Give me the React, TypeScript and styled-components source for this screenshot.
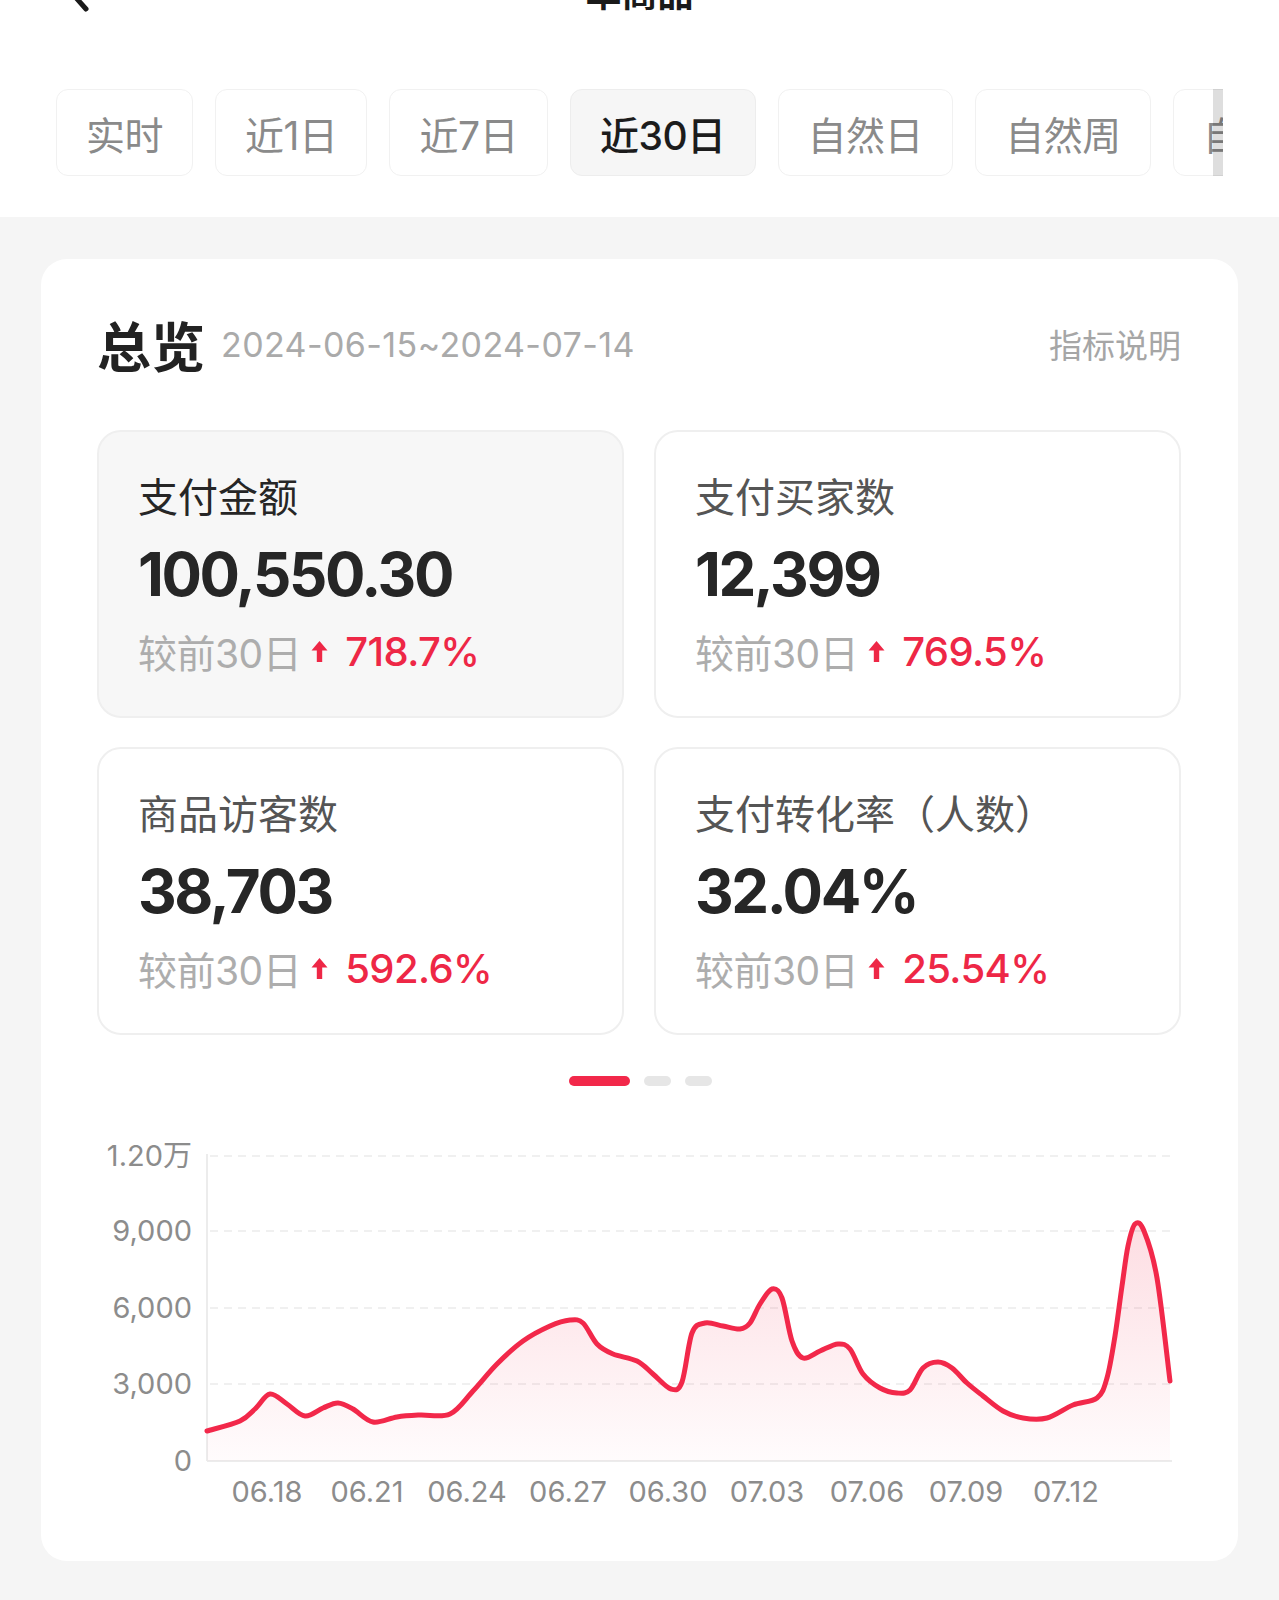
import styled, { createGlobalStyle } from 'styled-components';

const GlobalStyle = createGlobalStyle`
  html, body {
    margin: 0;
    padding: 0;
    background: #f5f5f5;
  }
  body {
    font-family: Inter, 'Noto Sans CJK SC', sans-serif;
    overflow-x: hidden;
  }
`;

const Page = styled.div`
  width: 1279px;
  min-height: 1600px;
  background: #f5f5f5;
  overflow: hidden;
`;

const TopSection = styled.div`
  background: #ffffff;
  padding-bottom: 41px;
`;

const NavBar = styled.div`
  position: relative;
  height: 44px;
  margin-top: -31px;
  display: flex;
  align-items: center;
  justify-content: center;
`;

const BackButton = styled.div`
  position: absolute;
  left: 62px;
  top: 0;
  width: 30px;
  height: 44px;
`;

const NavTitle = styled.div`
  font-family: 'Noto Sans CJK SC', sans-serif;
  font-size: 36px;
  font-weight: 700;
  line-height: 44px;
  color: #1a1a1a;
`;

const TabViewport = styled.div`
  position: relative;
  margin: 76px 0 0 56px;
  width: 1167px;
  overflow: hidden;

  &::after {
    content: '';
    position: absolute;
    right: 0;
    top: 0;
    bottom: 0;
    width: 10px;
    background: rgba(0, 0, 0, 0.13);
  }
`;

const TabRow = styled.div`
  display: flex;
  gap: 22px;
`;

const Tab = styled.div<{ active?: boolean }>`
  flex-shrink: 0;
  height: 87px;
  padding: 0 29px;
  box-sizing: border-box;
  display: flex;
  align-items: center;
  border: 1.5px solid ${(p) => (p.active ? '#ededed' : '#f1f1f1')};
  border-radius: 12px;
  background: ${(p) => (p.active ? '#f6f6f6' : '#ffffff')};
  color: ${(p) => (p.active ? '#1c1c1c' : '#8a8a8a')};
  font-size: 39px;
  font-weight: ${(p) => (p.active ? 500 : 400)};
  letter-spacing: -0.5px;
`;

const Card = styled.div`
  margin: 42px 41px 40px 41px;
  background: #ffffff;
  border-radius: 26px;
  padding: 55px 57px 50px 56px;
`;

const CardHeader = styled.div`
  display: flex;
  align-items: center;
  height: 60px;
`;

const CardTitle = styled.div`
  font-family: 'Noto Sans CJK SC', sans-serif;
  font-size: 54px;
  font-weight: 700;
  color: #222;
  margin-right: 16px;
`;

const DateRange = styled.div`
  font-size: 34px;
  color: #aaaaaa;
  letter-spacing: 0.4px;
  flex: 1;
`;

const HeaderLink = styled.div`
  font-family: 'Noto Sans CJK SC', sans-serif;
  font-size: 33px;
  color: #a6a6a6;
`;

const MetricGrid = styled.div`
  margin-top: 56px;
  display: grid;
  grid-template-columns: 1fr 1fr;
  gap: 29px 30px;
`;

const MetricCard = styled.div<{ active?: boolean }>`
  height: 288px;
  box-sizing: border-box;
  padding: 37px 30px 0 39px;
  border: 2px solid #efefef;
  border-radius: 24px;
  background: ${(p) => (p.active ? '#f7f7f7' : '#ffffff')};
`;

const MetricLabel = styled.div<{ active?: boolean }>`
  font-family: 'Noto Sans CJK SC', sans-serif;
  font-size: 40px;
  line-height: 52px;
  color: ${(p) => (p.active ? '#262626' : '#555555')};
`;

const MetricValue = styled.div`
  margin-top: 13px;
  font-size: 60px;
  line-height: 80px;
  font-weight: 700;
  color: #262626;
  letter-spacing: -2.4px;
`;

const CompareRow = styled.div`
  margin-top: 11px;
  display: flex;
  align-items: center;
  height: 52px;
`;

const CompareLabel = styled.span`
  font-size: 39px;
  color: #adadad;
  letter-spacing: -0.5px;
`;

const CompareValue = styled.span`
  margin-left: 17px;
  font-size: 40px;
  font-weight: 500;
  color: #ee2746;
  letter-spacing: -0.6px;
`;

const ArrowWrap = styled.span`
  display: inline-flex;
  margin-left: 10px;
`;

const Dots = styled.div`
  margin-top: 41px;
  display: flex;
  justify-content: center;
  gap: 14px;
  padding-left: 2px;
`;

const Dot = styled.div<{ active?: boolean }>`
  width: ${(p) => (p.active ? 61 : 27)}px;
  height: 10px;
  border-radius: 5px;
  background: ${(p) => (p.active ? '#f2284a' : '#e6e6e6')};
`;

const ChartBox = styled.div`
  margin-top: 35px;
  height: 390px;
`;

const tabs = ['实时', '近1日', '近7日', '近30日', '自然日', '自然周', '自然月'];

const metrics = [
  { label: '支付金额', value: '100,550.30', change: '718.7%', active: true },
  { label: '支付买家数', value: '12,399', change: '769.5%' },
  { label: '商品访客数', value: '38,703', change: '592.6%' },
  { label: '支付转化率（人数）', value: '32.04%', change: '25.54%' },
];

// page coordinates of the curve, shifted into the chart box below
const OX = 97;
const OY = 1120;
const rawPoints: [number, number][] = [
  [207, 1430], [240, 1420], [255, 1408], [270, 1393], [287, 1403], [305, 1415],
  [323, 1407], [338, 1402], [353, 1408], [373, 1421], [397, 1416], [420, 1414],
  [450, 1413], [473, 1390], [497, 1363], [523, 1340], [550, 1325], [570, 1319],
  [583, 1322], [597, 1343], [613, 1353], [637, 1360], [653, 1373], [671, 1388],
  [682, 1381], [692, 1332], [705, 1322], [723, 1325], [740, 1328], [750, 1322],
  [760, 1303], [772, 1288], [782, 1297], [792, 1340], [803, 1357], [820, 1350],
  [838, 1343], [850, 1348], [863, 1373], [880, 1387], [897, 1392], [910, 1389],
  [923, 1367], [938, 1361], [952, 1367], [967, 1382], [983, 1395], [1003, 1410],
  [1023, 1417], [1047, 1417], [1073, 1404], [1097, 1397], [1107, 1377], [1115, 1335],
  [1122, 1285], [1128, 1245], [1135, 1223], [1144, 1230], [1157, 1277], [1170, 1380],
];
const points = rawPoints.map(([x, y]) => [x - OX, y - OY]);

const smoothPath = (pts: number[][]) => {
  let d = `M${pts[0][0]},${pts[0][1]}`;
  for (let i = 0; i < pts.length - 1; i++) {
    const p0 = pts[i - 1] || pts[i];
    const p1 = pts[i];
    const p2 = pts[i + 1];
    const p3 = pts[i + 2] || p2;
    const c1x = p1[0] + (p2[0] - p0[0]) / 6;
    const c1y = p1[1] + (p2[1] - p0[1]) / 6;
    const c2x = p2[0] - (p3[0] - p1[0]) / 6;
    const c2y = p2[1] - (p3[1] - p1[1]) / 6;
    d += ` C${c1x.toFixed(1)},${c1y.toFixed(1)} ${c2x.toFixed(1)},${c2y.toFixed(1)} ${p2[0]},${p2[1]}`;
  }
  return d;
};

const yTicks = [
  { label: '1.20万', y: 35 },
  { label: '9,000', y: 110 },
  { label: '6,000', y: 187 },
  { label: '3,000', y: 263 },
  { label: '0', y: 340 },
];

const xTicks = [
  { label: '06.18', x: 267 },
  { label: '06.21', x: 367 },
  { label: '06.24', x: 467 },
  { label: '06.27', x: 568 },
  { label: '06.30', x: 668 },
  { label: '07.03', x: 767 },
  { label: '07.06', x: 867 },
  { label: '07.09', x: 966 },
  { label: '07.12', x: 1066 },
];

const UpArrow = () => (
  <svg width="17" height="23" viewBox="0 0 17 23">
    <path d="M8.5 1 L16.5 10.5 L11.2 10.5 L11.2 22 L5.8 22 L5.8 10.5 L0.5 10.5 Z" fill="#ee2746" />
  </svg>
);

const TrendChart = () => {
  const line = smoothPath(points);
  const last = points[points.length - 1];
  const area = `${line} L${last[0]},340 L${points[0][0]},340 Z`;
  return (
    <svg width="1084" height="390" viewBox="0 0 1084 390">
      <defs>
        <linearGradient id="areaFill" x1="0" y1="100" x2="0" y2="340" gradientUnits="userSpaceOnUse">
          <stop offset="0" stopColor="#f2284a" stopOpacity="0.16" />
          <stop offset="1" stopColor="#f2284a" stopOpacity="0.015" />
        </linearGradient>
      </defs>
      {yTicks.slice(0, 4).map((t) => (
        <line key={t.label} x1="113" x2="1075" y1={t.y} y2={t.y} stroke="#ececec" strokeWidth="1.5" strokeDasharray="8 6" />
      ))}
      <line x1="110" x2="110" y1="33" y2="340" stroke="#ececec" strokeWidth="2" />
      <line x1="110" x2="1075" y1="340" y2="340" stroke="#ececec" strokeWidth="2" />
      {yTicks.map((t) => (
        <text key={t.label} x="95" y={t.y + 10} textAnchor="end" fontSize="29" fill="#8c8c8c" fontFamily="Inter, 'Noto Sans CJK SC', sans-serif">
          {t.label}
        </text>
      ))}
      {xTicks.map((t) => (
        <text key={t.label} x={t.x - OX} y="381" textAnchor="middle" fontSize="29" fill="#8c8c8c" fontFamily="Inter, 'Noto Sans CJK SC', sans-serif">
          {t.label}
        </text>
      ))}
      <path d={area} fill="url(#areaFill)" />
      <path d={line} fill="none" stroke="#f2284a" strokeWidth="5" strokeLinecap="round" strokeLinejoin="round" />
    </svg>
  );
};

const App = () => {
  return (
    <Page>
      <GlobalStyle />
      <TopSection>
        <NavBar>
          <BackButton>
            <svg width="30" height="44" viewBox="0 0 30 44">
              <path d="M24 4 L8 22 L24 40" fill="none" stroke="#1a1a1a" strokeWidth="5" strokeLinecap="round" strokeLinejoin="round" />
            </svg>
          </BackButton>
          <NavTitle>单商品</NavTitle>
        </NavBar>
        <TabViewport>
          <TabRow>
            {tabs.map((t) => (
              <Tab key={t} active={t === '近30日'}>
                {t}
              </Tab>
            ))}
          </TabRow>
        </TabViewport>
      </TopSection>

      <Card>
        <CardHeader>
          <CardTitle>总览</CardTitle>
          <DateRange>2024-06-15~2024-07-14</DateRange>
          <HeaderLink>指标说明</HeaderLink>
        </CardHeader>

        <MetricGrid>
          {metrics.map((m) => (
            <MetricCard key={m.label} active={m.active}>
              <MetricLabel active={m.active}>{m.label}</MetricLabel>
              <MetricValue>{m.value}</MetricValue>
              <CompareRow>
                <CompareLabel>较前30日</CompareLabel>
                <ArrowWrap>
                  <UpArrow />
                </ArrowWrap>
                <CompareValue>{m.change}</CompareValue>
              </CompareRow>
            </MetricCard>
          ))}
        </MetricGrid>

        <Dots>
          <Dot active />
          <Dot />
          <Dot />
        </Dots>

        <ChartBox>
          <TrendChart />
        </ChartBox>
      </Card>
    </Page>
  );
};

export default App;
